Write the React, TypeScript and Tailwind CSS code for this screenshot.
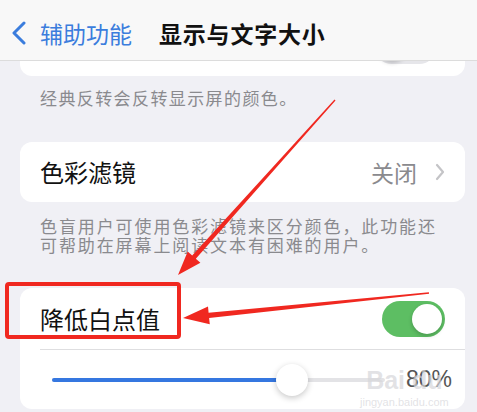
import React from 'react';

const cjk = { fontFamily: '"Noto Sans CJK SC", "Noto Sans", sans-serif' };

// tapered arrow polygon from start to tip
function arrowPoints(x1: number, y1: number, x2: number, y2: number, head = 24, hw = 9, w0 = 0.8, w1 = 2.6) {
  const dx = x2 - x1;
  const dy = y2 - y1;
  const len = Math.hypot(dx, dy);
  const ux = dx / len;
  const uy = dy / len;
  const px = -uy;
  const py = ux;
  const bx = x2 - ux * head;
  const by = y2 - uy * head;
  const pts = [
    [x1 + px * w0, y1 + py * w0],
    [bx + px * w1, by + py * w1],
    [bx + px * hw, by + py * hw],
    [x2, y2],
    [bx - px * hw, by - py * hw],
    [bx - px * w1, by - py * w1],
    [x1 - px * w0, y1 - py * w0],
  ];
  return pts.map((p) => p.map((n) => n.toFixed(1)).join(',')).join(' ');
}

function Toggle({ on }: { on: boolean }) {
  return (
    <div
      className={`flex h-[36px] w-[63px] items-center rounded-full p-[3px] ${
        on ? 'justify-end bg-[#5dbe63]' : 'justify-start bg-[#e6e6ea]'
      }`}
    >
      <div className="h-[30px] w-[30px] rounded-full bg-white shadow-[0_2px_4px_rgba(0,0,0,0.2)]" />
    </div>
  );
}

export default function App() {
  return (
    <div className="relative h-[412px] w-[477px] overflow-hidden bg-[#f0f0f5]" style={cjk}>
      {/* Nav bar */}
      <div className="relative z-10 flex h-[61px] items-center border-b border-[#dcdcdc] bg-[#f8f8f8] pl-[11px] pt-[6px]">
        <svg width="16" height="24" viewBox="0 0 16 24" className="mr-[13px]">
          <path d="M13 2 L3 12 L13 22" fill="none" stroke="#3b7ddd" strokeWidth="3" strokeLinecap="round" strokeLinejoin="round" />
        </svg>
        <span className="text-[23px] leading-none text-[#3b7ddd]">辅助功能</span>
        <span className="ml-[27px] text-[23px] font-semibold leading-none tracking-[0.8px] text-[#111]">显示与文字大小</span>
      </div>

      {/* cut-off card from previous section */}
      <div className="-mt-[1px] ml-[20px] mr-[12px] flex h-[16px] justify-end overflow-hidden rounded-b-[12px] bg-white pr-[28px]">
        <div className="-mt-[32px]">
          <Toggle on={false} />
        </div>
      </div>

      <p className="mt-[12px] px-[40px] text-[17px] leading-[19px] tracking-[1.4px] text-[#8a8a8e]">经典反转会反转显示屏的颜色。</p>

      {/* Color filters */}
      <div className="ml-[20px] mr-[12px] mt-[35px] flex h-[60px] items-center rounded-[12px] bg-white pl-[20px] pr-[20px]">
        <span className="flex-1 text-[24px] leading-none text-[#111]">色彩滤镜</span>
        <span className="text-[23px] leading-none text-[#8a8a8e]">关闭</span>
        <svg width="10" height="18" viewBox="0 0 10 18" className="ml-[18px]">
          <path d="M2 2 L8 9 L2 16" fill="none" stroke="#c4c4c7" strokeWidth="2.2" strokeLinecap="round" strokeLinejoin="round" />
        </svg>
      </div>

      <div className="mt-[14px] px-[40px] text-[17px] leading-[19px] tracking-[1.9px] text-[#8a8a8e]">
        <p>色盲用户可使用色彩滤镜来区分颜色，此功能还</p>
        <p>可帮助在屏幕上阅读文本有困难的用户。</p>
      </div>

      {/* Reduce white point */}
      <div className="ml-[20px] mr-[12px] mt-[34px] rounded-[12px] bg-white">
        <div className="flex h-[61px] items-center pl-[20px] pr-[20px]">
          <span className="flex-1 text-[24px] leading-none text-[#111]">降低白点值</span>
          <Toggle on />
        </div>
        <div className="ml-[20px] h-px bg-[#dedee0]" />
        <div className="flex h-[59px] items-center pl-[32px] pr-[13px]">
          <div className="relative flex h-[4px] w-[333px] items-center rounded-full bg-[#e3e3e6]">
            <div className="h-[4px] w-[239px] rounded-full bg-[#3577e0]" />
            <div className="absolute left-[224px] h-[32px] w-[32px] rounded-full bg-white shadow-[0_2px_6px_rgba(0,0,0,0.22)]" />
          </div>
          <span className="ml-auto text-[23px] leading-none text-[#555]" style={{ fontFamily: '"Liberation Sans", sans-serif' }}>
            80%
          </span>
        </div>
      </div>

      {/* watermark */}
      <div className="pointer-events-none absolute left-[360px] top-[368px] flex flex-col items-center text-[#d6d6da]/70">
        <span className="text-[25px] font-bold leading-none" style={{ fontFamily: '"Liberation Sans", sans-serif' }}>
          Bai du
        </span>
        <span className="mt-[4px] text-[11px] leading-none" style={{ fontFamily: '"Liberation Sans", sans-serif' }}>
          jingyan.baidu.com
        </span>
      </div>

      {/* annotation box */}
      <div className="pointer-events-none absolute left-[5px] top-[282px] h-[57px] w-[176px] rounded-[4px] border-[4px] border-[#f02820]" />

      {/* annotation arrows */}
      <svg className="pointer-events-none absolute inset-0" width="477" height="412">
        <polygon points={arrowPoints(335, 100, 178, 275, 24, 8.5, 0.7, 2.4)} fill="#f02820" />
        <polygon points={arrowPoints(429, 293, 183, 318, 26, 9, 0.7, 2.6)} fill="#f02820" />
      </svg>
    </div>
  );
}
